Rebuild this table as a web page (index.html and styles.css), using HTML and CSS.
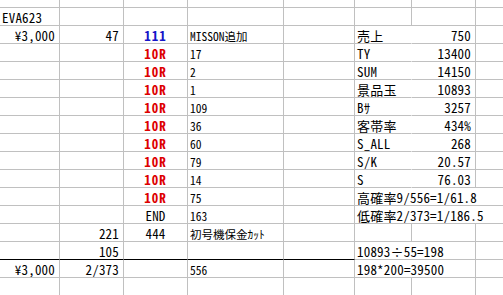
FILE: index.html
```html
<!DOCTYPE html>
<html lang="ja">
<head>
<meta charset="utf-8">
<title>EVA623</title>
<link rel="stylesheet" href="styles.css">
</head>
<body>
<div class="sheet">
  <!-- row 0 (partial) -->
  <div class="c"></div><div class="c"></div><div class="c"></div><div class="c"></div><div class="c"></div><div class="c"></div><div class="c"></div><div class="c"></div>
  <!-- row 1 -->
  <div class="c l">EVA623</div><div class="c"></div><div class="c"></div><div class="c"></div><div class="c"></div><div class="c"></div><div class="c"></div><div class="c"></div>
  <!-- row 2 -->
  <div class="c r">¥3,000</div><div class="c r">47</div><div class="c m blue">111</div><div class="c sm">MISSON追加</div><div class="c"></div><div class="c l nr">売上</div><div class="c r">750</div><div class="c"></div>
  <!-- row 3 -->
  <div class="c"></div><div class="c"></div><div class="c m red">10R</div><div class="c sm">17</div><div class="c"></div><div class="c l nr">TY</div><div class="c r">13400</div><div class="c"></div>
  <!-- row 4 -->
  <div class="c"></div><div class="c"></div><div class="c m red">10R</div><div class="c sm">2</div><div class="c"></div><div class="c l nr">SUM</div><div class="c r">14150</div><div class="c"></div>
  <!-- row 5 -->
  <div class="c"></div><div class="c"></div><div class="c m red">10R</div><div class="c sm">1</div><div class="c"></div><div class="c l nr">景品玉</div><div class="c r">10893</div><div class="c"></div>
  <!-- row 6 -->
  <div class="c"></div><div class="c"></div><div class="c m red">10R</div><div class="c sm">109</div><div class="c"></div><div class="c l nr">Bｻ</div><div class="c r">3257</div><div class="c"></div>
  <!-- row 7 -->
  <div class="c"></div><div class="c"></div><div class="c m red">10R</div><div class="c sm">36</div><div class="c"></div><div class="c l nr">客帯率</div><div class="c r">434%</div><div class="c"></div>
  <!-- row 8 -->
  <div class="c"></div><div class="c"></div><div class="c m red">10R</div><div class="c sm">60</div><div class="c"></div><div class="c l nr">S_ALL</div><div class="c r">268</div><div class="c"></div>
  <!-- row 9 -->
  <div class="c"></div><div class="c"></div><div class="c m red">10R</div><div class="c sm">79</div><div class="c"></div><div class="c l nr">S/K</div><div class="c r">20.57</div><div class="c"></div>
  <!-- row 10 -->
  <div class="c"></div><div class="c"></div><div class="c m red">10R</div><div class="c sm">14</div><div class="c"></div><div class="c l nr">S</div><div class="c r">76.03</div><div class="c"></div>
  <!-- row 11 -->
  <div class="c"></div><div class="c"></div><div class="c m red">10R</div><div class="c sm">75</div><div class="c"></div><div class="c l s3">高確率9/556=1/61.8</div>
  <!-- row 12 -->
  <div class="c"></div><div class="c"></div><div class="c m">END</div><div class="c sm">163</div><div class="c"></div><div class="c l s3">低確率2/373=1/186.5</div>
  <!-- row 13 -->
  <div class="c"></div><div class="c r">221</div><div class="c m">444</div><div class="c sm">初号機保金ｶｯﾄ</div><div class="c"></div><div class="c"></div><div class="c"></div><div class="c"></div>
  <!-- row 14 -->
  <div class="c bk"></div><div class="c r bk">105</div><div class="c bk"></div><div class="c bk"></div><div class="c bk"></div><div class="c l s2">10893÷55=198</div><div class="c"></div>
  <!-- row 15 -->
  <div class="c r">¥3,000</div><div class="c r">2/373</div><div class="c"></div><div class="c sm">556</div><div class="c"></div><div class="c l s2">198*200=39500</div><div class="c"></div>
  <!-- row 16 (partial) -->
  <div class="c"></div><div class="c"></div><div class="c"></div><div class="c"></div><div class="c"></div><div class="c"></div><div class="c"></div><div class="c"></div>
</div>
</body>
</html>
```
FILE: styles.css
```css
html, body {
  margin: 0;
  padding: 0;
  background: #ffffff;
  overflow: hidden;
}

.sheet {
  display: grid;
  grid-template-columns: 60px 64px 64px 96px 71px 57px 64px 40px;
  grid-template-rows: 8px repeat(16, 18px);
  width: 516px;
  font-family: "Noto Sans CJK JP", sans-serif;
  font-feature-settings: "hwid" 1;
  font-size: 13px;
  letter-spacing: 0.2px;
  color: #000000;
}

.c {
  box-sizing: border-box;
  border-right: 1px solid #c0c0c0;
  border-bottom: 1px solid #c0c0c0;
  line-height: 17px;
  padding-top: 1px;
  white-space: nowrap;
  overflow: hidden;
}

.l {
  padding-left: 2px;
}

.r {
  text-align: right;
  padding-right: 4px;
}

.m {
  text-align: center;
}

.sm {
  font-size: 11.5px;
  letter-spacing: 0;
  padding-left: 2px;
  padding-top: 2px;
}

.nr {
  border-right-color: transparent;
}

.bk {
  border-bottom-color: #000000;
}

.s2 {
  grid-column: span 2;
}

.s3 {
  grid-column: span 3;
}

.red {
  color: #dd0000;
  font-weight: bold;
  letter-spacing: 1px;
}

.blue {
  color: #1515c8;
  font-weight: bold;
  letter-spacing: 1px;
}
```
